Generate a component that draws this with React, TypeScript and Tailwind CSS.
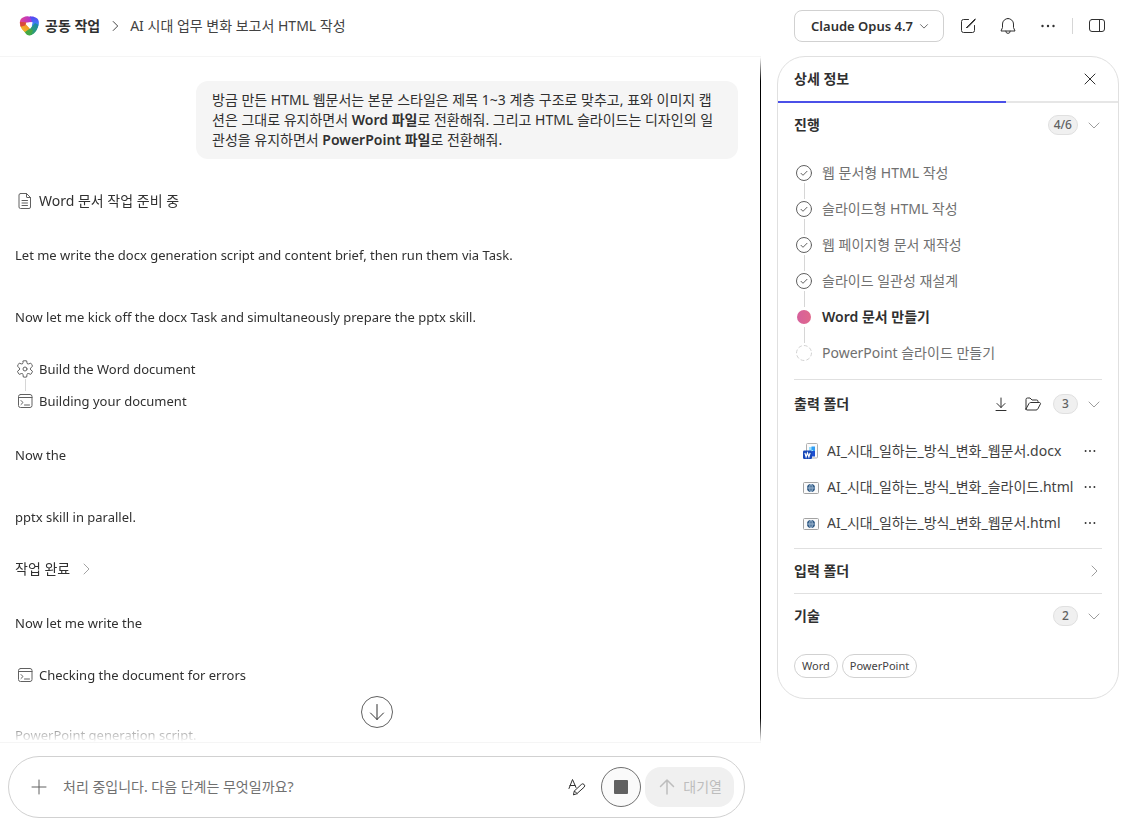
import type { ReactNode, SVGProps } from "react"

type IconProps = SVGProps<SVGSVGElement>

function Icon({ children, ...props }: IconProps) {
  return (
    <svg
      width="20"
      height="20"
      viewBox="0 0 20 20"
      fill="none"
      stroke="currentColor"
      strokeLinecap="round"
      strokeLinejoin="round"
      aria-hidden="true"
      {...props}
    >
      {children}
    </svg>
  )
}

const ChevronDown = (props: IconProps) => (
  <Icon {...props}>
    <path d="M5 8l5 5 5-5" />
  </Icon>
)

const ChevronRight = (props: IconProps) => (
  <Icon {...props}>
    <path d="M8 5l5 5-5 5" />
  </Icon>
)

const Dots = (props: IconProps) => (
  <Icon {...props} fill="currentColor" stroke="none">
    <circle cx="4.5" cy="10" r="1.2" />
    <circle cx="10" cy="10" r="1.2" />
    <circle cx="15.5" cy="10" r="1.2" />
  </Icon>
)

const DocumentIcon = () => (
  <Icon>
    <path d="M5.500 2.500h6l4 4V16a1.500 1.500 0 0 1-1.500 1.500H5.500A1.500 1.500 0 0 1 4 16V4a1.500 1.500 0 0 1 1.500-1.500z" />
    <path d="M11.500 2.500V6a.5.5 0 0 0 .5.5h3.500M7 9.500h5.500M7 12h5.500M7 14.500h5.500" />
  </Icon>
)

const GearIcon = () => (
  <Icon>
    <circle cx="10" cy="10" r="2" />
    <path d="M8.300 1.900a8.300 8.300 0 0 1 3.400 0l.3 2a1.300 1.300 0 0 0 1.800 1l1.900-.8a8.300 8.300 0 0 1 1.800 3L15.900 8.900a1.300 1.300 0 0 0 0 2.100l1.600 1.300a8.300 8.300 0 0 1-1.800 3.100l-1.900-.8a1.300 1.300 0 0 0-1.800 1l-.3 2.400a8.300 8.300 0 0 1-3.400 0L8 15.600a1.300 1.300 0 0 0-1.800-1l-1.900.8a8.300 8.300 0 0 1-1.800-3.100L4.100 11a1.300 1.300 0 0 0 0-2.100L2.500 7.100a8.300 8.300 0 0 1 1.800-3l1.900.8a1.300 1.300 0 0 0 1.800-1z" />
  </Icon>
)

const TerminalIcon = () => (
  <Icon>
    <rect x="3.500" y="3.500" width="13.500" height="13" rx="2" />
    <path d="M3.500 6.500h13.500M6 9.500l2 2-2 2M9.500 14h5" />
  </Icon>
)

const Logo = () => (
  <svg width="20" height="20" viewBox="0 0 20 20" aria-hidden="true">
    <defs>
      <linearGradient id="logoTop" x1="0" x2="1">
        <stop offset="0" stopColor="#e8478c" />
        <stop offset="1" stopColor="#a832d8" />
      </linearGradient>
      <linearGradient id="logoRight" x1="0" y1="0" x2="0" y2="1">
        <stop offset="0" stopColor="#5a3df0" />
        <stop offset="1" stopColor="#2f9cf8" />
      </linearGradient>
      <linearGradient id="logoBottom" x1="1" y1="0" x2="0" y2="1">
        <stop offset="0" stopColor="#167fb8" />
        <stop offset="1" stopColor="#3fb04a" />
      </linearGradient>
      <linearGradient id="logoLeft" x1="0" y1="1" x2="1" y2="0">
        <stop offset="0" stopColor="#f6c12c" />
        <stop offset="1" stopColor="#ef8a2a" />
      </linearGradient>
      <clipPath id="logoShape">
        <path d="M4.500 1.300C6 .4 8 .2 9.500.5c1 .2 1.600.2 2.500 0 2-.4 3.500.2 5 1.300C19 2.500 20 4.500 19.900 7c-.2 4-1.900 8-4.900 10.500-1.500 1.200-3 1.900-4.500 1.900-2 0-3.300-1-4.500-2.900-.9-1.400-2.500-2.300-3.500-4C1.300 10.300.8 8 .9 6c.1-2 1.400-4 3.600-4.700z" />
      </clipPath>
    </defs>
    <g clipPath="url(#logoShape)">
      <path d="M0 0h12l1.500 6.500H7L0 8z" fill="url(#logoTop)" />
      <path d="M10.500 0H20v9l-3.500 2-4-.5.8-4z" fill="url(#logoRight)" />
      <path d="M20 9l-3 8-6 3-2-5 3-3.500L16 7z" fill="url(#logoBottom)" />
      <path d="M4 13l5-1.500 5 3L11 20H6z" fill="#45a843" />
      <path d="M0 9l7-1.500 4 5L6 16l-4-1z" fill="url(#logoLeft)" />
      <path d="M0 6l7.500.2L6 9.500 1 11z" fill="#d8483c" />
    </g>
    <path d="M6.800 8.200C8.500 6.500 11 6 13.400 6.300c0 2.200-.6 4.500-2.400 6.400z" fill="#fff" />
  </svg>
)

const WordIcon = () => (
  <svg width="16" height="16" viewBox="0 0 16 16" aria-hidden="true">
    <rect x="3.500" y="0.500" width="11" height="14.500" rx="1" fill="#fbfbfc" stroke="#b0b0b0" />
    <path d="M6 4h4v4H6z" fill="#9be0fc" />
    <path d="M8.500 3.500H12V9h-2V7H8.500z" fill="#2f9df4" />
    <path d="M9 8h3v5.500H9z" fill="#1d4fd0" />
    <rect x="0" y="7.500" width="9" height="8.500" rx="1.200" fill="#1747b8" />
    <path d="M1.900 9.800l1.200 4 1.400-3.800 1.400 3.800 1.200-4" fill="none" stroke="#fff" strokeWidth="1.200" />
  </svg>
)

const HtmlIcon = () => (
  <svg width="16" height="16" viewBox="0 0 16 16" aria-hidden="true">
    <rect x="0.500" y="3.500" width="15" height="11" rx="1" fill="#fafafa" stroke="#a3a3a3" />
    <circle cx="8" cy="9" r="4" fill="#2a5580" />
    <path d="M4 9h8M8 5v8M8 5c-2.500 2-2.500 6 0 8 2.500-2 2.500-6 0-8" fill="none" stroke="#b9cfe4" strokeWidth="0.700" />
  </svg>
)

const steps = [
  { label: "웹 문서형 HTML 작성", state: "done" },
  { label: "슬라이드형 HTML 작성", state: "done" },
  { label: "웹 페이지형 문서 재작성", state: "done" },
  { label: "슬라이드 일관성 재설계", state: "done" },
  { label: "Word 문서 만들기", state: "active" },
  { label: "PowerPoint 슬라이드 만들기", state: "pending" },
]

const files = [
  { name: "AI_시대_일하는_방식_변화_웹문서.docx", icon: WordIcon },
  { name: "AI_시대_일하는_방식_변화_슬라이드.html", icon: HtmlIcon },
  { name: "AI_시대_일하는_방식_변화_웹문서.html", icon: HtmlIcon },
]

const skills = ["Word", "PowerPoint"]

function Header() {
  return (
    <header className="flex h-14 shrink-0 items-center justify-between pr-[26px] pb-1 pl-[19px]">
      <nav className="flex items-center" aria-label="탐색 경로">
        <a href="#" className="flex items-center gap-1.5 font-semibold">
          <Logo />
          공동 작업
        </a>
        <ChevronRight className="mx-1.5 size-[18px]" />
        <a href="#" className="text-[#424242]">
          AI 시대 업무 변화 보고서 HTML 작성
        </a>
      </nav>
      <div className="flex items-center">
        <button className="flex h-8 w-[150px] items-center justify-end gap-1 rounded-lg border border-[#d1d1d1] pr-3 text-[13px] font-semibold">
          Claude Opus 4.7
          <ChevronDown className="size-3.5" />
        </button>
        <button className="ml-3.5" aria-label="새 채팅">
          <Icon>
            <path d="M10.500 3.500H5.500a2 2 0 0 0-2 2v9a2 2 0 0 0 2 2h9a2 2 0 0 0 2-2V9.500M8.500 11.500L17 3M8.500 11.500h1.300L17.300 3.700" />
          </Icon>
        </button>
        <button className="ml-5" aria-label="알림">
          <Icon>
            <path d="M10 2.500A5.500 5.500 0 0 0 4.500 8v3.500L3 15h14l-1.500-3.500V8A5.500 5.500 0 0 0 10 2.500zM7.800 15.200a2.200 2.200 0 0 0 4.400 0" />
          </Icon>
        </button>
        <button className="ml-5" aria-label="더 보기">
          <Dots />
        </button>
        <span className="ml-3.5 h-4 w-px bg-[#d6d6d6]" />
        <button className="ml-3.5" aria-label="패널 전환">
          <Icon>
            <rect x="2.500" y="3.500" width="15" height="12" rx="2.500" />
            <path d="M12.500 3.500v12" />
          </Icon>
        </button>
      </div>
    </header>
  )
}

function Paragraph({ children }: { children: ReactNode }) {
  return <p className="py-[21px] text-[13px]/5">{children}</p>
}

interface ToolStepProps {
  icon: ReactNode
  className?: string
  children: ReactNode
}

function ToolStep({ icon, className = "text-[13px]", children }: ToolStepProps) {
  return (
    <div className="flex items-center gap-1">
      <span className="text-[#616161]">{icon}</span>
      <span className={className}>{children}</span>
    </div>
  )
}

function Conversation() {
  return (
    <div className="relative flex min-h-0 flex-1 border-y border-[#f5f5f5]">
      <div className="min-w-0 flex-1 overflow-hidden pt-6 pr-[22px] pl-[15px] [mask-image:linear-gradient(to_bottom,transparent,black_24px,black_calc(100%_-_24px),transparent)]">
        <div className="mb-[21px] ml-auto w-[542px] max-w-full rounded-xl bg-[#f5f5f5] px-4 py-[9px] break-all">
          방금 만든 HTML 웹문서는 본문 스타일은 제목 1~3 계층 구조로 맞추고, 표와 이미지 캡션은 그대로 유지하면서 <b className="font-semibold">Word 파일</b>로
          전환해줘. 그리고 HTML 슬라이드는 디자인의 일관성을 유지하면서 <b className="font-semibold">PowerPoint 파일</b>로 전환해줘.
        </div>
        <div className="pt-[11px] pb-[13px]">
          <ToolStep icon={<DocumentIcon />} className="text-sm">
            Word 문서 작업 준비 중
          </ToolStep>
        </div>
        <Paragraph>Let me write the docx generation script and content brief, then run them via Task.</Paragraph>
        <Paragraph>Now let me kick off the docx Task and simultaneously prepare the pptx skill.</Paragraph>
        <div className="pt-[11px] pb-[13px]">
          <ToolStep icon={<GearIcon />}>Build the Word document</ToolStep>
          <div className="ml-2.5 h-3 w-px bg-[#d6d6d6]" />
          <ToolStep icon={<TerminalIcon />}>Building your document</ToolStep>
        </div>
        <Paragraph>Now the</Paragraph>
        <Paragraph>pptx skill in parallel.</Paragraph>
        <div className="pt-[11px] pb-[13px]">
          <button className="flex items-center gap-1.5">
            작업 완료
            <ChevronRight className="text-[#a3a3a3]" />
          </button>
        </div>
        <Paragraph>Now let me write the</Paragraph>
        <div className="pt-[11px] pb-[19px]">
          <ToolStep icon={<TerminalIcon />}>Checking the document for errors</ToolStep>
        </div>
        <Paragraph>PowerPoint generation script.</Paragraph>
      </div>
      <div className="w-px bg-black [mask-image:linear-gradient(to_bottom,transparent,black_24px,black_calc(100%_-_24px),transparent)]" />
      <div className="absolute right-2 bottom-3.5 left-0 flex justify-center">
        <button className="flex size-8 items-center justify-center rounded-full border border-[#616161] bg-white" aria-label="맨 아래로">
          <Icon>
            <path d="M10 2.500v15M3.500 11l6.500 6.500 6.500-6.500" />
          </Icon>
        </button>
      </div>
    </div>
  )
}

function Composer() {
  return (
    <form className="mt-[13px] mr-4 mb-3.5 ml-2 flex h-[62px] shrink-0 items-center rounded-full border border-[#d1d1d1] pr-2.5 pl-5">
      <button type="button" className="text-[#616161]" aria-label="추가">
        <Icon>
          <path d="M10 3v14M3 10h14" />
        </Icon>
      </button>
      <input
        className="ml-3.5 min-w-0 flex-1 outline-none placeholder:text-[#707070]"
        placeholder="처리 중입니다. 다음 단계는 무엇일까요?"
        aria-label="메시지"
      />
      <button type="button" aria-label="텍스트 편집">
        <Icon>
          <path d="M2 11.500L5.500 2.500l3.500 8M3 8.500h5M6.500 17.500l.8-3.500 7-6.500a1.900 1.900 0 0 1 2.800 2.700l-7 6.300zM7.300 14l2.800 2.500" />
        </Icon>
      </button>
      <button
        type="button"
        className="ml-3.5 flex size-10 items-center justify-center rounded-full border border-[#707070] bg-[#fafafa]"
        aria-label="중지"
      >
        <span className="size-3.5 rounded-[1px] bg-[#616161]" />
      </button>
      <button type="submit" disabled className="ml-1 flex h-10 items-center gap-1.5 rounded-2xl bg-[#f0f0f0] px-3 text-[#bdbdbd]">
        <Icon strokeWidth={1.5}>
          <path d="M10 17V3M3.500 9.500L10 3l6.500 6.500" />
        </Icon>
        대기열
      </button>
    </form>
  )
}

function StepMark({ state }: { state: string }) {
  if (state === "done") {
    return (
      <Icon className="size-4 text-[#616161]" viewBox="0 0 16 16">
        <circle cx="8" cy="8" r="7.500" />
        <path d="M5 8.300l2 2 4-4" />
      </Icon>
    )
  }
  if (state === "active") {
    return <span className="mx-px size-3.5 rounded-full bg-linear-to-r from-[#d6609c] to-[#e0688c]" />
  }
  return (
    <Icon className="size-4 text-[#d1d1d1]" viewBox="0 0 16 16">
      <circle cx="8" cy="8" r="7.500" strokeDasharray="3 2.900" />
    </Icon>
  )
}

function Badge({ children }: { children: ReactNode }) {
  return (
    <span className="flex h-5 min-w-[25px] items-center justify-center rounded-full border border-[#e0e0e0] bg-[#f0f0f0] px-[5px] text-xs font-medium text-[#616161]">
      {children}
    </span>
  )
}

interface SectionProps {
  title: string
  count?: string
  actions?: ReactNode
  open?: boolean
  children?: ReactNode
}

function Section({ title, count, actions, open = true, children }: SectionProps) {
  const Chevron = open ? ChevronDown : ChevronRight
  return (
    <section className="mx-4 border-t border-[#e0e0e0] first:border-t-0">
      <div className={actions ? "flex h-12 items-center" : "flex h-11 items-center"}>
        <h3 className="flex-1 font-semibold">{title}</h3>
        {actions}
        {count && <Badge>{count}</Badge>}
        <button className="ml-2 text-[#9e9e9e]" aria-label={title}>
          <Chevron className="size-4" viewBox="2 2 16 16" />
        </button>
      </div>
      {children}
    </section>
  )
}

function DetailsPanel() {
  return (
    <aside className="mr-3.5 ml-4 w-[342px] shrink-0 self-start overflow-hidden rounded-[28px] border border-[#e0e0e0]">
      <div className="flex h-11 items-center justify-between px-4">
        <h2 className="font-semibold">상세 정보</h2>
        <button className="mr-0.5" aria-label="닫기">
          <Icon>
            <path d="M5 5l10 10M15 5L5 15" />
          </Icon>
        </button>
      </div>
      <div className="h-0.5 bg-[#e6e6e6]">
        <div className="h-full w-[67%] bg-[#4b50e8]" />
      </div>
      <div>
        <Section title="진행" count="4/6">
          <ol className="py-2">
            {steps.map((step, i) => (
              <li key={step.label} className="relative flex h-9 items-center gap-2.5 pl-0.5">
                {i > 0 && <span className="absolute -top-2 left-2.5 h-4 w-px bg-[#d6d6d6]" />}
                <StepMark state={step.state} />
                <span className={step.state === "active" ? "font-semibold" : "text-[#707070]"}>{step.label}</span>
              </li>
            ))}
          </ol>
        </Section>
        <Section
          title="출력 폴더"
          count="3"
          actions={
            <>
              <button className="mr-3" aria-label="다운로드">
                <Icon>
                  <path d="M10 4v9.500M6 9.500l4 4 4-4M5 16.500h10" />
                </Icon>
              </button>
              <button className="mr-2.5" aria-label="폴더 열기">
                <Icon>
                  <path d="M3 15V5.500A1.500 1.500 0 0 1 4.500 4H7l2 2h4.500A1.500 1.500 0 0 1 15 7.500V8.500M3 15l3-5.500a2 2 0 0 1 1.700-1h8.800a1 1 0 0 1 .9 1.500l-2.600 5a2 2 0 0 1-1.800 1H4a1 1 0 0 1-1-1z" />
                </Icon>
              </button>
            </>
          }
        >
          <ul className="pt-[5px] pb-[7px]">
            {files.map(({ name, icon: FileIcon }) => (
              <li key={name} className="flex h-9 items-center pl-[9px]">
                <FileIcon />
                <a href="#" className="ml-2 flex-1 truncate text-[#424242]">
                  {name}
                </a>
                <button className="mr-1" aria-label="파일 옵션">
                  <Dots className="size-4" />
                </button>
              </li>
            ))}
          </ul>
        </Section>
        <Section title="입력 폴더" open={false} />
        <Section title="기술" count="2">
          <div className="flex gap-1 pt-4 pb-5">
            {skills.map((skill) => (
              <span key={skill} className="flex h-6 items-center rounded-full border border-[#d1d1d1] px-[7px] text-[11px] text-[#424242]">
                {skill}
              </span>
            ))}
          </div>
        </Section>
      </div>
    </aside>
  )
}

export default function App() {
  return (
    <div className="flex h-screen flex-col bg-white font-['Noto_Sans','Noto_Sans_CJK_KR',sans-serif] text-sm/5 text-[#303030]">
      <Header />
      <div className="flex min-h-0 flex-1">
        <main className="flex min-w-0 flex-1 flex-col">
          <Conversation />
          <Composer />
        </main>
        <DetailsPanel />
      </div>
    </div>
  )
}
